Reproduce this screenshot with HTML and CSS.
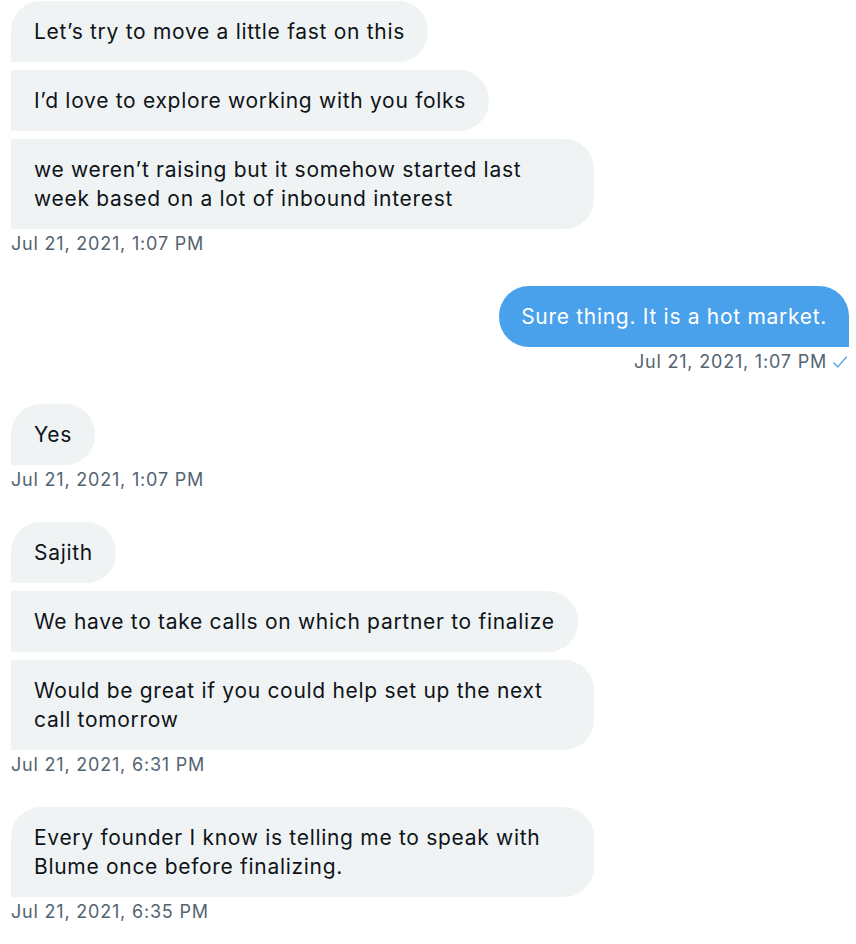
FILE: index.html
```html
<!DOCTYPE html>
<html lang="en">
<head>
<meta charset="utf-8">
<link rel="stylesheet" href="styles.css">
</head>
<body>
<div class="chat">
  <div class="group received">
    <div class="bubble first">Let’s try to move a little fast on this</div>
    <div class="bubble">I’d love to explore working with you folks</div>
    <div class="bubble last">we weren’t raising but it somehow started last week based on a lot of inbound interest</div>
    <div class="time">Jul 21, 2021, 1:07 PM</div>
  </div>
  <div class="group sent">
    <div class="bubble first last">Sure thing. It is a hot market.</div>
    <div class="time">Jul 21, 2021, 1:07 PM
      <svg class="check" viewBox="0 0 24 24" width="18" height="18"><path d="M4 13.2l5 5.3L20.5 5.5" fill="none" stroke="#4a9fe8" stroke-width="1.9" stroke-linecap="round" stroke-linejoin="round"/></svg>
    </div>
  </div>
  <div class="group received">
    <div class="bubble first last">Yes</div>
    <div class="time">Jul 21, 2021, 1:07 PM</div>
  </div>
  <div class="group received">
    <div class="bubble first">Sajith</div>
    <div class="bubble">We have to take calls on which partner to finalize</div>
    <div class="bubble last">Would be great if you could help set up the next call tomorrow</div>
    <div class="time">Jul 21, 2021, 6:31 PM</div>
  </div>
  <div class="group received">
    <div class="bubble first last">Every founder I know is telling me to speak with Blume once before finalizing.</div>
    <div class="time">Jul 21, 2021, 6:35 PM</div>
  </div>
</div>
</body>
</html>
```

FILE: styles.css
```css
html, body {
  margin: 0;
  padding: 0;
  background: #ffffff;
}
body {
  font-family: "Inter", "Liberation Sans", sans-serif;
  color: #0f1419;
}
.chat {
  display: flex;
  flex-direction: column;
  gap: 31px;
  padding: 1px 7px 0 11px;
}
.group {
  display: flex;
  flex-direction: column;
  gap: 8px;
}
.group.received { align-items: flex-start; }
.group.sent { align-items: flex-end; }
.bubble {
  max-width: 537px;
  padding: 16px 23px;
  font-size: 21px;
  line-height: 29px;
  background: #eff3f4;
  border-radius: 30px;
  letter-spacing: 0.7px;
}
.received .bubble {
  border-top-left-radius: 0;
  border-bottom-left-radius: 0;
}
.received .bubble.first { border-top-left-radius: 30px; }
.sent .bubble {
  padding: 16px 22px;
  background: #4aa1eb;
  color: #ffffff;
  border-bottom-right-radius: 0;
}
.time {
  margin-top: -4px;
  font-size: 18px;
  line-height: 22px;
  letter-spacing: 0.8px;
  color: #536471;
  display: flex;
  align-items: center;
  gap: 4px;
}
.check { display: block; }
```
